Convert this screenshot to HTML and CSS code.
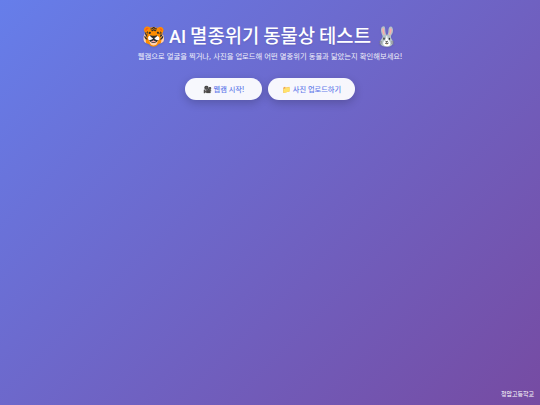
FILE: index.html
```html
<!DOCTYPE html>
<html lang="ko">
<head>
  <meta charset="UTF-8" />
  <title>AI 멸종위기 동물상 테스트</title>
  <link rel="stylesheet" href="styles.css">
</head>
<body>
  <main class="container">
    <h1>🐯 <b class="latin">AI</b> 멸종위기 동물상 테스트 🐰</h1>
    <p class="subtitle">웹캠으로 얼굴을 찍거나, 사진을 업로드해 어떤 멸종위기 동물과 닮았는지 확인해보세요!</p>
    <div class="buttons">
      <button class="btn">🎥 웹캠 시작!</button>
      <button class="btn">📁 사진 업로드하기</button>
    </div>
  </main>
  <footer>청암고등학교</footer>
</body>
</html>
```

FILE: styles.css
```css
* {
  margin: 0;
  padding: 0;
  box-sizing: border-box;
}

html, body {
  height: 100%;
}

body {
  background: linear-gradient(135deg, #667eea 0%, #764ba2 100%);
  font-family: Inter, "Noto Sans CJK KR", sans-serif;
  color: white;
  display: flex;
  flex-direction: column;
  overflow: hidden;
}

.container {
  flex: 1;
  padding-top: 26px;
  text-align: center;
}

h1 {
  font-size: 18.8px;
  font-weight: 500;
  word-spacing: -1px;
  line-height: 22px;
  margin-bottom: 4px;
  text-shadow: 0 1px 2px rgba(0, 0, 0, 0.1);
}

.latin {
  font-family: Roboto, sans-serif;
  font-size: 18px;
  font-weight: 500;
}

.subtitle {
  font-size: 7.3px;
  line-height: 10px;
  opacity: 0.9;
  margin-bottom: 16px;
}

.buttons {
  display: flex;
  justify-content: center;
  gap: 6px;
}

.btn {
  background: rgba(255, 255, 255, 0.95);
  color: #667eea;
  border: none;
  border-radius: 14px;
  min-width: 77px;
  padding: 0 14px;
  height: 22px;
  font-family: inherit;
  font-size: 7.2px;
  font-weight: 500;
  box-shadow: 0 3px 10px rgba(0, 0, 0, 0.2);
}

footer {
  font-size: 6px;
  text-align: right;
  padding: 0 6px 7px 0;
}
```
